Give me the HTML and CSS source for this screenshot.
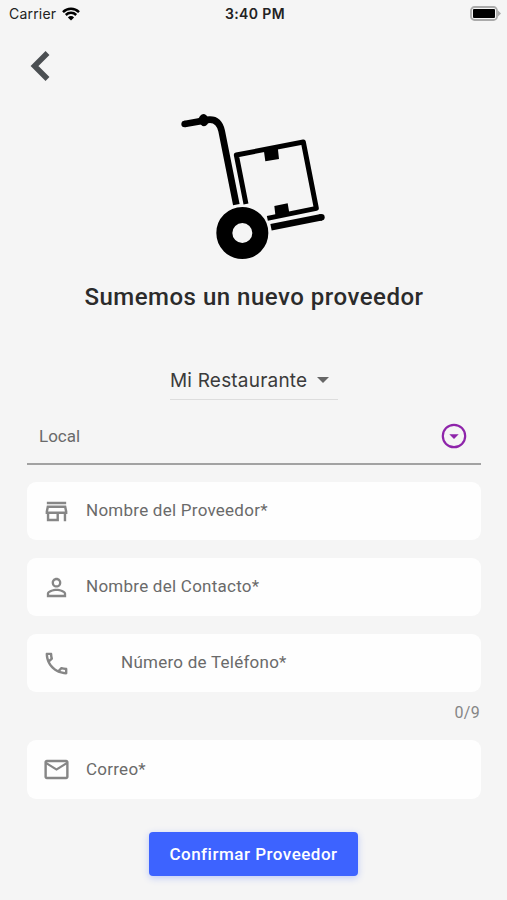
FILE: index.html
```html
<!DOCTYPE html>
<html lang="es">
<head>
	<meta charset="utf-8">
	<title>Nuevo proveedor</title>
	<link rel="stylesheet" href="styles.css">
</head>
<body>

<header class="statusBar">
	<div class="carrier">
		<span>Carrier</span>
		<svg class="wifi" viewBox="0 0 18 14">
			<path d="M1 5.1a11.4 11.4 0 0 1 16 0M3.8 8a7.4 7.4 0 0 1 10.4 0"/>
			<path class="dot" d="M9 13.5 5.9 10.4a4.4 4.4 0 0 1 6.2 0z"/>
		</svg>
	</div>
	<span class="time">3:40 PM</span>
	<div class="power">
		<svg class="battery" viewBox="0 0 31 15">
			<rect class="shell" x="1" y="1" width="26" height="13" rx="3.5"/>
			<path class="tip" d="M28 4.5 31 7.5 28 10.5z"/>
			<rect x="3" y="3" width="22" height="9" rx="1"/>
		</svg>
	</div>
</header>

<nav class="topNav">
	<a href="#" class="back" aria-label="Volver">
		<svg viewBox="0 0 20 30"><path d="M17.5 2 4.5 15l13 13"/></svg>
	</a>
</nav>

<main>
	<!-- hand truck with a box -->
	<svg class="truck" viewBox="0 0 510 510">
		<path class="handle" d="M44 72 118 59C139 58 150 71 155 93L199 314"/>
		<path d="M90 48q9-11 18-3l9 10-4 17q-10 12-20 2l-10-14z"/>
		<path class="box" d="M228 312 199 165 400 126 439 325 292 355"/>
		<path d="M281 148l42-8 4 37-41 7zM313 318l40-8 6 35-42 8z"/>
		<path class="plate" d="M303 382 454 352"/>
		<circle cx="454" cy="352" r="10"/>
		<circle cx="44" cy="72" r="10"/>
		<circle class="wheel" cx="217" cy="399" r="54"/>
	</svg>

	<h1>Sumemos un nuevo proveedor</h1>

	<div class="restaurant">
		<span>Mi Restaurante</span>
		<i class="caret"></i>
	</div>

	<form>
		<div class="local">
			<span>Local</span>
			<svg viewBox="0 0 26 26">
				<circle cx="13" cy="13" r="11.2"/>
				<path d="M8.3 11.2h9.4L13 16z"/>
			</svg>
		</div>

		<div class="fields">
			<label class="field">
				<svg viewBox="0 0 24 24"><path d="M18.36 9l.6 3H5.04l.6-3h12.72M20 4H4v2h16V4zm0 3H4l-1 5v2h1v6h10v-6h4v6h2v-6h1v-2l-1-5zM6 18v-4h6v4H6z"/></svg>
				<span>Nombre del Proveedor*</span>
			</label>

			<label class="field">
				<svg viewBox="0 0 24 24"><path d="M12 5.9a2.1 2.1 0 1 1 0 4.2 2.1 2.1 0 0 1 0-4.2m0 9c2.97 0 6.1 1.46 6.1 2.1v1.1H5.9V17c0-.64 3.13-2.1 6.1-2.1M12 4C9.79 4 8 5.79 8 8s1.79 4 4 4 4-1.79 4-4-1.79-4-4-4zm0 9c-2.67 0-8 1.34-8 4v3h16v-3c0-2.66-5.33-4-8-4z"/></svg>
				<span>Nombre del Contacto*</span>
			</label>

			<label class="field phone">
				<svg viewBox="0 0 24 24"><path d="M6.54 5c.06.89.21 1.76.45 2.59l-1.2 1.2c-.41-1.2-.67-2.47-.76-3.79h1.51m9.86 12.02c.85.24 1.72.39 2.6.45v1.49c-1.32-.09-2.59-.35-3.8-.75l1.2-1.19M7.5 3H4c-.55 0-1 .45-1 1 0 9.39 7.61 17 17 17 .55 0 1-.45 1-1v-3.49c0-.55-.45-1-1-1-1.24 0-2.45-.2-3.57-.57-.1-.04-.21-.05-.31-.05-.26 0-.51.1-.71.29l-2.2 2.2c-2.83-1.45-5.15-3.76-6.59-6.59l2.2-2.2c.28-.28.36-.67.25-1.02C8.7 6.45 8.5 5.25 8.5 4c0-.55-.45-1-1-1z"/></svg>
				<span>Número de Teléfono*</span>
			</label>
		</div>
		<div class="counter">0/9</div>

		<label class="field mail">
			<svg viewBox="0 0 24 24"><path d="M22 6c0-1.1-.9-2-2-2H4c-1.1 0-2 .9-2 2v12c0 1.1.9 2 2 2h16c1.1 0 2-.9 2-2V6zm-2 0-8 5-8-5h16zm0 12H4V8l8 5 8-5v10z"/></svg>
			<span>Correo*</span>
		</label>

		<button type="button" class="confirm">Confirmar Proveedor</button>
	</form>
</main>

</body>
</html>
```

FILE: styles.css
```css
* {
	box-sizing: border-box;
}
body {
	margin: 0;
	height: 900px;
	overflow: hidden;
	background-color: #f5f5f5;
	font-family: Roboto, "Noto Sans", sans-serif;
	color: #6a6a6a;
}
svg {
	display: block;
}

.statusBar {
	display: grid;
	grid-template-columns: 1fr auto 1fr;
	align-items: center;
	height: 27px;
	padding: 0 6px 0 9px;
	font-family: Inter, sans-serif;
	font-size: 14px;
	color: #222;
}
.carrier {
	display: flex;
	align-items: center;
	gap: 6px;
	letter-spacing: .2px;
}
.wifi {
	width: 18px;
	height: 14px;
	fill: none;
	stroke: #000;
	stroke-width: 2.5;
}
.wifi .dot {
	fill: #000;
	stroke: none;
}
.time {
	font-weight: 600;
	letter-spacing: .4px;
}
.power {
	display: flex;
	justify-content: flex-end;
}
.battery {
	width: 31px;
	height: 15px;
}
.battery .shell {
	fill: #f5f5f5;
	stroke: #aaa;
	stroke-width: 1.8;
}
.battery .tip {
	fill: #aaa;
}

.topNav {
	height: 73px;
	padding: 24px 0 0 30px;
}
.back {
	display: block;
	width: 20px;
}
.back svg {
	width: 20px;
	height: 30px;
	fill: none;
	stroke: #4b4f52;
	stroke-width: 5.5;
}

main {
	display: flex;
	flex-direction: column;
	align-items: center;
	padding: 0 26px 0 27px;
}
.truck {
	width: 170px;
	height: 170px;
	margin-left: 1px;
}
.truck .handle,
.truck .box,
.truck .plate,
.truck .wheel {
	fill: none;
	stroke: #000;
}
.truck .handle,
.truck .plate {
	stroke-width: 20;
}
.truck .box {
	stroke-width: 15;
	stroke-linejoin: round;
}
.truck .wheel {
	stroke-width: 48;
}

h1 {
	margin: 11px 0 0;
	font-size: 24px;
	line-height: 32px;
	font-weight: 500;
	letter-spacing: .5px;
	white-space: nowrap;
	color: #2b2b2b;
}
.restaurant {
	display: flex;
	align-items: center;
	gap: 10px;
	width: 168px;
	height: 39px;
	margin-top: 48px;
	border-bottom: 1px solid #ddd;
	font-family: Inter, sans-serif;
	font-size: 19px;
	letter-spacing: .2px;
	white-space: nowrap;
	color: #3b3b3b;
}
.caret {
	border: 6.5px solid transparent;
	border-top-color: #666;
	border-bottom: 0;
}

form {
	display: flex;
	flex-direction: column;
	width: 454px;
	font-size: 17px;
}
.local {
	display: flex;
	align-items: center;
	justify-content: space-between;
	height: 65px;
	padding: 8px 14px 0 12px;
	border-bottom: 2px solid #a2a2a2;
}
.local svg {
	width: 26px;
	height: 26px;
	fill: none;
	stroke: #8e24aa;
	stroke-width: 2.2;
}
.local path {
	fill: #8e24aa;
	stroke: none;
}
.fields {
	display: flex;
	flex-direction: column;
	gap: 18px;
	margin-top: 17px;
}
.field {
	display: flex;
	align-items: center;
	gap: 15px;
	height: 58px;
	padding-left: 15px;
	background-color: #fefefe;
	border-radius: 9px;
}
.field svg {
	width: 29px;
	height: 29px;
	fill: #868686;
}
.field span {
	padding-bottom: 2px;
	letter-spacing: .25px;
}
.phone {
	gap: 50px;
}
.mail {
	height: 59px;
	margin-top: 17px;
}
.counter {
	height: 20px;
	margin-top: 11px;
	padding-right: 1px;
	font-size: 16px;
	line-height: 20px;
	letter-spacing: .3px;
	text-align: right;
	color: #858585;
}
.confirm {
	align-self: center;
	width: 209px;
	height: 44px;
	margin: 33px 1px 0 0;
	padding: 0;
	border: 0;
	border-radius: 4px;
	background-color: #3d63ff;
	box-shadow: 0 2px 7px rgba(61, 99, 255, .3);
	font-family: inherit;
	font-size: 17px;
	font-weight: 500;
	letter-spacing: .5px;
	white-space: nowrap;
	color: #fff;
}
```
